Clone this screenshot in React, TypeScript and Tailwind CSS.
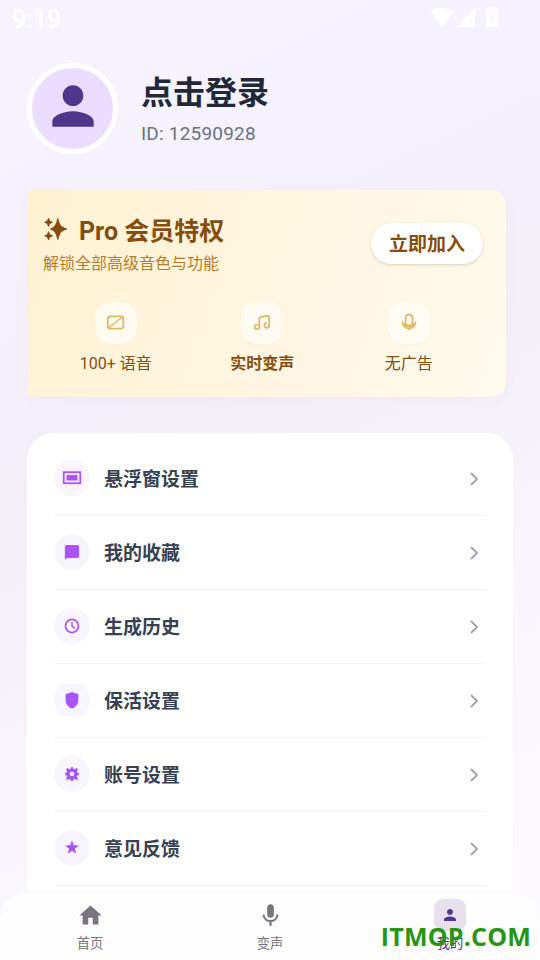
import type { ReactNode } from 'react';

const menu: { label: string; icon: ReactNode }[] = [
  {
    label: '悬浮窗设置',
    icon: (
      <>
        <rect x="3" y="5.700" width="18" height="12" fill="none" stroke="currentColor" strokeWidth="2" />
        <rect x="6" y="8.600" width="12" height="6.200" />
      </>
    ),
  },
  {
    label: '我的收藏',
    icon: <path d="M6 4.300h12a1.800 1.800 0 0 1 1.800 1.800v10.600a1.800 1.800 0 0 1-1.800 1.800H6.600L4.200 20.200V6.100A1.800 1.800 0 0 1 6 4.300z" />,
  },
  {
    label: '生成历史',
    icon: (
      <g fill="none" stroke="currentColor" strokeWidth="1.900">
        <circle cx="12" cy="12" r="7.100" />
        <path d="M12 7.600V12.400l3.200 2.200" strokeWidth="1.500" />
      </g>
    ),
  },
  {
    label: '保活设置',
    icon: <path d="M12 3.200l7 2.600v6.400c0 4-2.900 7.800-7 9-4.100-1.200-7-5-7-9V5.800z" />,
  },
  {
    label: '账号设置',
    icon: (
      <g fill="none" stroke="currentColor">
        <circle cx="12" cy="12" r="4.300" strokeWidth="3.600" />
        <path d="M12 4.500v2.500M12 17v2.500M4.500 12H7M17 12h2.500M6.300 6.300L8.400 8.400M15.600 15.600l2.100 2.100M17.700 6.300l-2.100 2.100M8.400 15.600l-2.100 2.100" strokeWidth="2.800" />
      </g>
    ),
  },
  {
    label: '意见反馈',
    icon: <path d="M12 3.600l1.900 5.500 5.700.2-4.500 3.500 1.600 5.600-4.700-3.300-4.700 3.300 1.600-5.600-4.500-3.500 5.700-.2z" />,
  },
];

const features: { label: string; bold?: boolean; icon: ReactNode }[] = [
  {
    label: '100+ 语音',
    icon: (
      <>
        <rect x="3.200" y="5" width="17.800" height="14" rx="2.800" />
        <path d="M5 17.500L19 6.500" strokeWidth="1.600" />
      </>
    ),
  },
  {
    label: '实时变声',
    bold: true,
    icon: (
      <>
        <path d="M5.700 14.300a2.700 2.700 0 1 0 2.700 2.900V7.500c0-1 .5-1.500 1.400-1.700l7.800-1.400c1.200-.2 2 .3 2 1.500v9.800" />
        <path d="M16.200 12.800a2.700 2.700 0 1 0 3.400 2.600" />
      </>
    ),
  },
  {
    label: '无广告',
    icon: (
      <>
        <rect x="8.700" y="3" width="8" height="12.500" rx="3.600" />
        <path d="M5.300 11.500c.3 4.300 3 7.200 7.400 7.200s7.100-2.900 7.400-7.200M12.700 18.700v1.300" />
        <path d="M7.200 13.800c1 2.200 2.800 3.200 5.500 3.200s4.500-1 5.500-3.200" strokeWidth="1.300" />
      </>
    ),
  },
];

const PERSON = 'M12 12c2.21 0 4-1.79 4-4s-1.79-4-4-4-4 1.79-4 4 1.79 4 4 4zm0 2c-2.67 0-8 1.34-8 4v2h16v-2c0-2.66-5.33-4-8-4z';

function StatusBar() {
  return (
    <div className="flex h-10 items-start justify-between pl-3 pr-[41px] text-white">
      <span className="pt-[6px] text-[25px] leading-7 font-medium">9:19</span>
      <div className="flex pt-[7px]">
        <svg className="h-5 w-6" viewBox="0 0 24 20" fill="currentColor">
          <path d="M.8 5C7.500-.3 17.500-.3 24 5L12.500 19.800z" />
        </svg>
        <svg className="ml-px h-5 w-5" viewBox="0 0 20 20" fill="currentColor">
          <path d="M20 1v19H1z" />
        </svg>
        <svg className="ml-2.5 h-5 w-3.5" viewBox="0 0 14 20" fill="currentColor">
          <path fillRule="evenodd" d="M4.500 0h5v1.800H12a1 1 0 0 1 1 1V19a1 1 0 0 1-1 1H2a1 1 0 0 1-1-1V2.800a1 1 0 0 1 1-1h2.500zM7.800 5.500L4 11.500h2.300V17L10 10.500H7.800zM3 4.500v2l2-2zM11 4.500v2l-2-2z" />
        </svg>
      </div>
    </div>
  );
}

function ProCard() {
  return (
    <section className="ml-[27.5px] mr-[34px] mt-9 h-[207px] rounded-l-[4px] rounded-r-[14px] bg-linear-[110deg] from-[#fef2d2] via-[#fff6e0] to-[#fffaed] shadow-[0_3px_14px_rgba(90,60,120,0.03)]">
      <div className="flex items-start justify-between pl-[15.5px] pr-[23px] pt-[24px]">
        <div>
          <div className="flex items-center">
            <svg className="-mt-1.5 h-[26px] w-[26px] text-[#854d0e]" viewBox="0 0 26 26" fill="currentColor" stroke="currentColor" strokeWidth="1" strokeLinejoin="round">
              <path d="M14.800 2.500c1.600 6.500 3 8.500 8.800 10.500-5.800 2-7.200 4-8.800 10.500-1.600-6.500-2.800-8.500-7.300-10.500 4.500-2 5.700-4 7.300-10.500zM5.500 2.200c.9 2.700 1.500 3.300 4 4.100-2.500.8-3.100 1.400-4 4.100-.9-2.700-1.500-3.300-3.800-4.100 2.300-.8 2.900-1.400 3.800-4.100zM5.500 15.700c.9 2.700 1.500 3.300 4 4.100-2.500.8-3.100 1.400-4 4.100-.9-2.700-1.500-3.300-3.800-4.100 2.300-.8 2.900-1.400 3.800-4.100z" />
            </svg>
            <h2 className="ml-[10px] pt-px text-[25px] leading-[34px] font-bold text-[#854d0e]">Pro 会员特权</h2>
          </div>
          <p className="text-base leading-[30px] text-[#b67c2d]">解锁全部高级音色与功能</p>
        </div>
        <button className="mt-[9px] h-[41px] w-[112px] rounded-full bg-white pt-[3px] text-[19px] font-bold text-[#854d0e] shadow-[0_1px_3px_rgba(80,60,20,0.22)]">
          立即加入
        </button>
      </div>
      <div className="mt-[23px] grid grid-cols-3 pl-[15px] pr-[24px]">
        {features.map((f) => (
          <div key={f.label} className="flex flex-col items-center">
            <div className="flex h-[42px] w-[42px] items-center justify-center rounded-[16px] bg-white/60 shadow-[0_1px_2px_rgba(160,120,40,0.04)]">
              <svg className="-mt-px h-[21px] w-[21px] text-[#dfb75f]" viewBox="0 0 24 24" fill="none" stroke="currentColor" strokeWidth="2" strokeLinecap="round">
                {f.icon}
              </svg>
            </div>
            <span className={f.bold ? 'mt-2 text-base leading-6 font-bold text-[#854d0e]' : 'mt-2 text-base leading-6 text-[#854d0e]'}>
              {f.label}
            </span>
          </div>
        ))}
      </div>
    </section>
  );
}

export default function App() {
  return (
    <div className="relative flex h-[960px] w-[540px] flex-col overflow-hidden bg-linear-[155deg] from-[#f6f3ff] from-10% via-[#f3eff7] via-42% to-[#fcfaff] to-90% font-['Roboto','Noto_Sans_CJK_SC',sans-serif]">
      <StatusBar />

      {/* Profile */}
      <header className="mt-[23px] flex h-[91px] items-center pl-[27px]">
        <div className="flex h-[91px] w-[91px] items-center justify-center rounded-full border-[5px] border-white bg-[#eaddff]">
          <svg className="-mt-1.5 h-[62px] w-[62px] text-[#4f378b]" viewBox="0 0 24 24" fill="currentColor">
            <path d={PERSON} />
          </svg>
        </div>
        <div className="ml-[23px] pt-px">
          <h1 className="text-[32px] leading-[44px] font-bold text-[#1f2937]">点击登录</h1>
          <p className="mt-[5px] text-[19px] leading-7 tracking-[0.2px] text-[#6b7280]">ID: 12590928</p>
        </div>
      </header>

      <ProCard />

      {/* Settings list */}
      <main className="mx-[27px] mt-9 min-h-0 flex-1 overflow-hidden rounded-t-[27px] bg-white px-[27px] pt-[9px]">
        {menu.map((item) => (
          <div key={item.label} className="flex h-[74px] items-center border-b border-[#f3f4f6] pb-px">
            <div className="flex h-9 w-9 items-center justify-center rounded-full bg-[#f8f5ff]">
              <svg className="h-[22px] w-[22px] text-[#a855f7]" viewBox="0 0 24 24" fill="currentColor">
                {item.icon}
              </svg>
            </div>
            <span className="ml-[14px] flex-1 pt-1 text-[19px] font-bold text-[#374151]">{item.label}</span>
            <svg className="mr-[5px] mt-px h-[14px] w-[14px] text-[#9ca3af]" viewBox="0 0 14 14" fill="none" stroke="currentColor" strokeWidth="1.800">
              <path d="M4 1l6 6-6 6" />
            </svg>
          </div>
        ))}
      </main>

      {/* Bottom tabs */}
      <nav className="absolute inset-x-0 bottom-0 grid h-[69px] grid-cols-3 rounded-t-[28px] border-t border-[#f8f7fa] bg-[#fdfdfe] text-[13.3px] leading-5 text-[#79747e]">
        <div className="flex flex-col items-center pt-[10px]">
          <svg className="h-[27px] w-[27px]" viewBox="0 0 24 24" fill="currentColor">
            <path d="M10 20v-6h4v6h5v-8h3L12 3 2 12h3v8z" />
          </svg>
          <span className="mt-[5px]">首页</span>
        </div>
        <div className="flex flex-col items-center pt-[10px]">
          <svg className="h-[27px] w-[27px]" viewBox="0 0 24 24" fill="currentColor">
            <path d="M12 14c1.660 0 3-1.340 3-3V5c0-1.660-1.340-3-3-3S9 3.340 9 5v6c0 1.660 1.340 3 3 3zm5.300-3c0 3-2.540 5.100-5.300 5.100S6.700 14 6.700 11H5c0 3.410 2.720 6.230 6 6.720V21h2v-3.280c3.280-.48 6-3.300 6-6.720z" />
          </svg>
          <span className="mt-[5px]">变声</span>
        </div>
        <div className="flex flex-col items-center pt-[7px] text-[#4f378b]">
          <div className="flex h-8 w-8 items-center justify-center rounded-[9px] bg-[#e7dfec]">
            <svg className="h-[18px] w-[18px]" viewBox="0 0 24 24" fill="currentColor">
              <path d={PERSON} />
            </svg>
          </div>
          <span className="mt-[3px]">我的</span>
        </div>
      </nav>

      <div className="absolute right-[9px] top-[919px] font-['Open_Sans',sans-serif] text-[25px] leading-[34px] font-bold tracking-[0.2px] text-[#299514]">
        ITMOP.COM
      </div>
    </div>
  );
}
